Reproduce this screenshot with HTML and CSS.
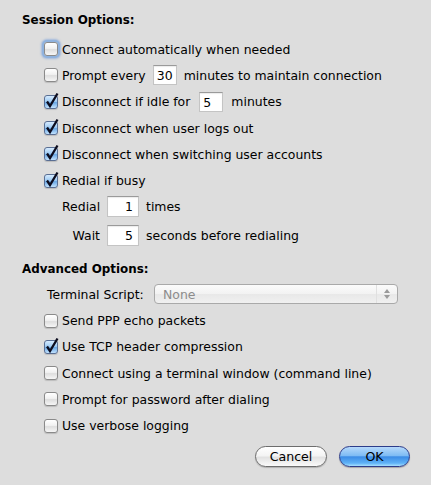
FILE: index.html
```html
<!DOCTYPE html>
<html>
<head>
<meta charset="utf-8">
<link rel="stylesheet" href="styles.css">
</head>
<body>
<div class="panel">
  <div class="title first">Session Options:</div>

  <div class="row opt">
    <span class="cb focus"></span><span class="lbl">Connect automatically when needed</span>
  </div>
  <div class="row opt">
    <span class="cb"></span><span class="lbl">Prompt every</span>
    <span class="field f30 center">30</span>
    <span class="lbl">minutes to maintain connection</span>
  </div>
  <div class="row opt">
    <span class="cb on"><svg viewBox="0 0 14 14"><path d="M3 6.5 L6 11 L13.5 -1.5"/></svg></span><span class="lbl">Disconnect if idle for</span>
    <span class="field f5 left">5</span>
    <span class="lbl">minutes</span>
  </div>
  <div class="row opt">
    <span class="cb on"><svg viewBox="0 0 14 14"><path d="M3 6.5 L6 11 L13.5 -1.5"/></svg></span><span class="lbl">Disconnect when user logs out</span>
  </div>
  <div class="row opt">
    <span class="cb on"><svg viewBox="0 0 14 14"><path d="M3 6.5 L6 11 L13.5 -1.5"/></svg></span><span class="lbl">Disconnect when switching user accounts</span>
  </div>
  <div class="row opt">
    <span class="cb on"><svg viewBox="0 0 14 14"><path d="M3 6.5 L6 11 L13.5 -1.5"/></svg></span><span class="lbl">Redial if busy</span>
  </div>
  <div class="row sub">
    <span class="sublbl">Redial</span>
    <span class="field fnum right">1</span>
    <span class="lbl">times</span>
  </div>
  <div class="row sub wait">
    <span class="sublbl">Wait</span>
    <span class="field fnum right">5</span>
    <span class="lbl">seconds before redialing</span>
  </div>

  <div class="title second">Advanced Options:</div>

  <div class="row script">
    <span class="scriptlbl">Terminal Script:</span>
    <span class="popup">
      <span class="popup-text">None</span>
      <span class="popup-arrows"><svg viewBox="0 0 8 12" width="8" height="12"><path d="M4 1 L7 5 L1 5 Z M4 11 L7 7 L1 7 Z"/></svg></span>
    </span>
  </div>
  <div class="row opt">
    <span class="cb"></span><span class="lbl">Send PPP echo packets</span>
  </div>
  <div class="row opt">
    <span class="cb on"><svg viewBox="0 0 14 14"><path d="M3 6.5 L6 11 L13.5 -1.5"/></svg></span><span class="lbl">Use TCP header compression</span>
  </div>
  <div class="row opt">
    <span class="cb"></span><span class="lbl">Connect using a terminal window (command line)</span>
  </div>
  <div class="row opt">
    <span class="cb"></span><span class="lbl">Prompt for password after dialing</span>
  </div>
  <div class="row opt">
    <span class="cb"></span><span class="lbl">Use verbose logging</span>
  </div>

  <div class="buttons">
    <span class="btn cancel">Cancel</span>
    <span class="btn ok">OK</span>
  </div>
</div>
</body>
</html>
```

FILE: styles.css
```css
html, body {
  margin: 0;
  padding: 0;
  background: #dddddd;
}

.panel {
  width: 431px;
  height: 485px;
  box-sizing: border-box;
  padding-top: 10px;
  font-family: "DejaVu Sans", Verdana, sans-serif;
  font-size: 12.45px;
  color: #000;
  display: flex;
  flex-direction: column;
}

.title {
  height: 20px;
  line-height: 20px;
  font-weight: bold;
  padding-left: 22px;
  font-size: 11.9px;
}

.title.second {
  margin-top: 10px;
}

.row {
  height: 26.3px;
  display: flex;
  align-items: center;
  white-space: nowrap;
}

.title.first + .row {
  margin-top: 6px;
}

.opt {
  padding-left: 44px;
}

.cb {
  position: relative;
  width: 14px;
  height: 14px;
  box-sizing: border-box;
  border: 1px solid #8a8a8a;
  border-radius: 3px;
  background: linear-gradient(#ffffff 0%, #f1f1f1 45%, #dedede 55%, #f6f6f6 100%);
  box-shadow: 0 1px 1px rgba(0,0,0,0.15);
  margin-right: 4px;
  flex: none;
}

.cb.focus {
  box-shadow: 0 0 0 2px #8fb2de, 0 0 2px 3px rgba(120,160,220,0.6);
}

.cb.on {
  border-color: #5a6f94;
  background: linear-gradient(#d6ebff 0%, #9fcbf3 45%, #6aa7e4 55%, #c2e3ff 100%);
}

.cb svg {
  position: absolute;
  left: -1px;
  top: -1px;
  width: 14px;
  height: 14px;
  overflow: visible;
}

.cb svg path {
  fill: none;
  stroke: #0c0c1e;
  stroke-width: 2.3;
  stroke-linecap: butt;
  stroke-linejoin: miter;
}

.field {
  height: 20px;
  line-height: 20px;
  box-sizing: border-box;
  background: #fff;
  border: 1px solid #c4c4c4;
  border-top-color: #9a9a9a;
  box-shadow: inset 0 1px 1px rgba(0,0,0,0.08);
  padding: 0 4px;
  font-size: 12.45px;
}

.f30 {
  width: 24px;
  margin: 0 7px 0 7px;
  padding: 0;
}

.f5 {
  width: 24px;
  margin: 0 8px 0 9px;
  padding-left: 3px;
}

.fnum {
  width: 32px;
  margin: 0 7px 0 7px;
  height: 21px;
  padding-right: 5px;
}

.center { text-align: center; }
.left { text-align: left; }
.right { text-align: right; }

.sub {
  padding-left: 62px;
}

.sublbl {
  width: 38px;
  text-align: right;
}

.wait {
  margin-top: 2.7px;
}

.script {
  margin-top: 2px;
  padding-left: 47px;
}

.scriptlbl {
  width: 107px;
}

.popup {
  position: relative;
  width: 244px;
  height: 20px;
  box-sizing: border-box;
  border: 1px solid #a9a9a9;
  border-radius: 4px;
  background: linear-gradient(#fbfbfb 0%, #f2f2f2 50%, #e8e8e8 51%, #f0f0f0 100%);
  display: flex;
  align-items: center;
  justify-content: space-between;
}

.popup-text {
  padding-left: 8px;
  color: #8c8c8c;
}

.popup-arrows {
  width: 20px;
  height: 18px;
  border-left: 1px solid #e0e0e0;
  display: flex;
  align-items: center;
  justify-content: center;
}

.popup-arrows svg path {
  fill: #9a9a9a;
}

.buttons {
  margin-top: 7px;
  display: flex;
  justify-content: flex-end;
  padding-right: 21px;
  gap: 12px;
}

.btn {
  width: 72px;
  height: 21px;
  box-sizing: border-box;
  border-radius: 11px;
  text-align: center;
  line-height: 19px;
  font-size: 12.6px;
}

.cancel {
  border: 1px solid #6d6d6d;
  background: linear-gradient(#ffffff 0%, #f4f4f4 45%, #e2e2e2 55%, #fafafa 100%);
  box-shadow: 0 1px 1px rgba(0,0,0,0.2);
}

.ok {
  width: 71px;
  border: 1px solid #2d3c8a;
  background: linear-gradient(#b6d9fb 0%, #7fbcf4 45%, #3c8ce6 52%, #5fb2f6 85%, #a8e0ff 100%);
  box-shadow: 0 1px 1px rgba(0,0,0,0.25);
}
```
